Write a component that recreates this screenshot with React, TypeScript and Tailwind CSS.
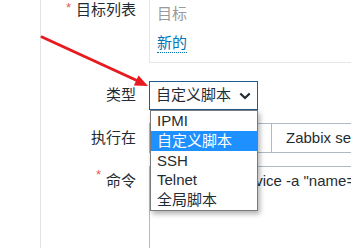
import React from "react";

const FONT = '"Liberation Sans", "Noto Sans CJK SC", Arial, sans-serif';

function Star() {
  return <span className="text-[#e45959] text-[13px] leading-none mr-[5px] relative top-[-3px]">*</span>;
}

export default function App() {
  return (
    <div
      className="relative w-[351px] h-[248px] overflow-hidden bg-white text-[15px] text-[#1f2c33]"
      style={{ fontFamily: FONT }}
    >
      <div className="ml-[40px] h-full border-l border-[#e3e3e3] flex flex-col">
        {/* Row 1: targets */}
        <div className="grid grid-cols-[95px_1fr] gap-x-[13px]">
          <div className="flex justify-end items-center h-[20px] leading-[20px]">
            <Star />
            <span>目标列表</span>
          </div>
          <div className="-mt-px h-[64px] border border-r-0 border-[#e6e6e6] pl-[7px] pt-[4px]">
            <div className="leading-[20px] text-[#9a9a9a]">目标</div>
            <div className="mt-[8px]">
              <span className="inline-block leading-[18px] text-[#0275b8] border-b border-dotted border-[#0275b8]">新的</span>
            </div>
          </div>
        </div>

        {/* Row 2: type */}
        <div className="grid grid-cols-[95px_1fr] gap-x-[13px] mt-[18px]">
          <div className="flex justify-end items-center">类型</div>
          <div className="w-[109px] h-[29px] border border-[#1f5c92] flex items-center justify-between pl-[6px] pr-[6px]">
            <span>自定义脚本</span>
            <svg width="12" height="8" viewBox="0 0 12 8">
              <polyline points="1.3,1.5 6,6 10.7,1.5" fill="none" stroke="#1f2c33" strokeWidth="2.2" />
            </svg>
          </div>
        </div>

        {/* Row 3: execute on */}
        <div className="grid grid-cols-[95px_1fr] gap-x-[13px] mt-[13px]">
          <div className="flex justify-end items-center">执行在</div>
          <div className="h-[30px] flex border border-r-0 border-[#acbbc4] whitespace-nowrap">
            <div className="w-[122px] flex items-center justify-center border-r border-[#acbbc4]">Zabbix客户端</div>
            <div className="flex items-center pl-[14px]">Zabbix server (代理)</div>
          </div>
        </div>

        {/* Row 4: command */}
        <div className="grid grid-cols-[95px_1fr] gap-x-[13px] mt-[13px] flex-1">
          <div className="flex justify-end items-start pt-[5px] leading-[20px]">
            <Star />
            <span>命令</span>
          </div>
          <div className="border-l border-t border-[#acbbc4] pl-[11px] pt-[4px] leading-[20px] whitespace-nowrap overflow-hidden">
            ansible -m service -a "name=nginx state=restarted"
          </div>
        </div>
      </div>

      {/* Dropdown list overlay */}
      <div className="absolute left-[150px] top-[110px] w-[108px] h-[101px] bg-white border border-[#7a7a7a] shadow-[2px_3px_5px_rgba(0,0,0,0.3)]">
        <div className="h-[20px] leading-[20px] pl-[6px]">IPMI</div>
        <div className="h-[20px] leading-[20px] pl-[6px] bg-[#1e90ff] text-white">自定义脚本</div>
        <div className="h-[19px] leading-[19px] pl-[6px]">SSH</div>
        <div className="h-[20px] leading-[20px] pl-[6px]">Telnet</div>
        <div className="h-[20px] leading-[20px] pl-[6px]">全局脚本</div>
      </div>

      {/* Red arrow overlay */}
      <svg className="absolute left-0 top-0" width="351" height="248" viewBox="0 0 351 248">
        <line x1="42" y1="37" x2="138" y2="81" stroke="#e8191f" strokeWidth="3" strokeLinecap="round" />
        <polygon points="148,86 133.9,85.5 138.5,75.6" fill="#e8191f" />
      </svg>
    </div>
  );
}
